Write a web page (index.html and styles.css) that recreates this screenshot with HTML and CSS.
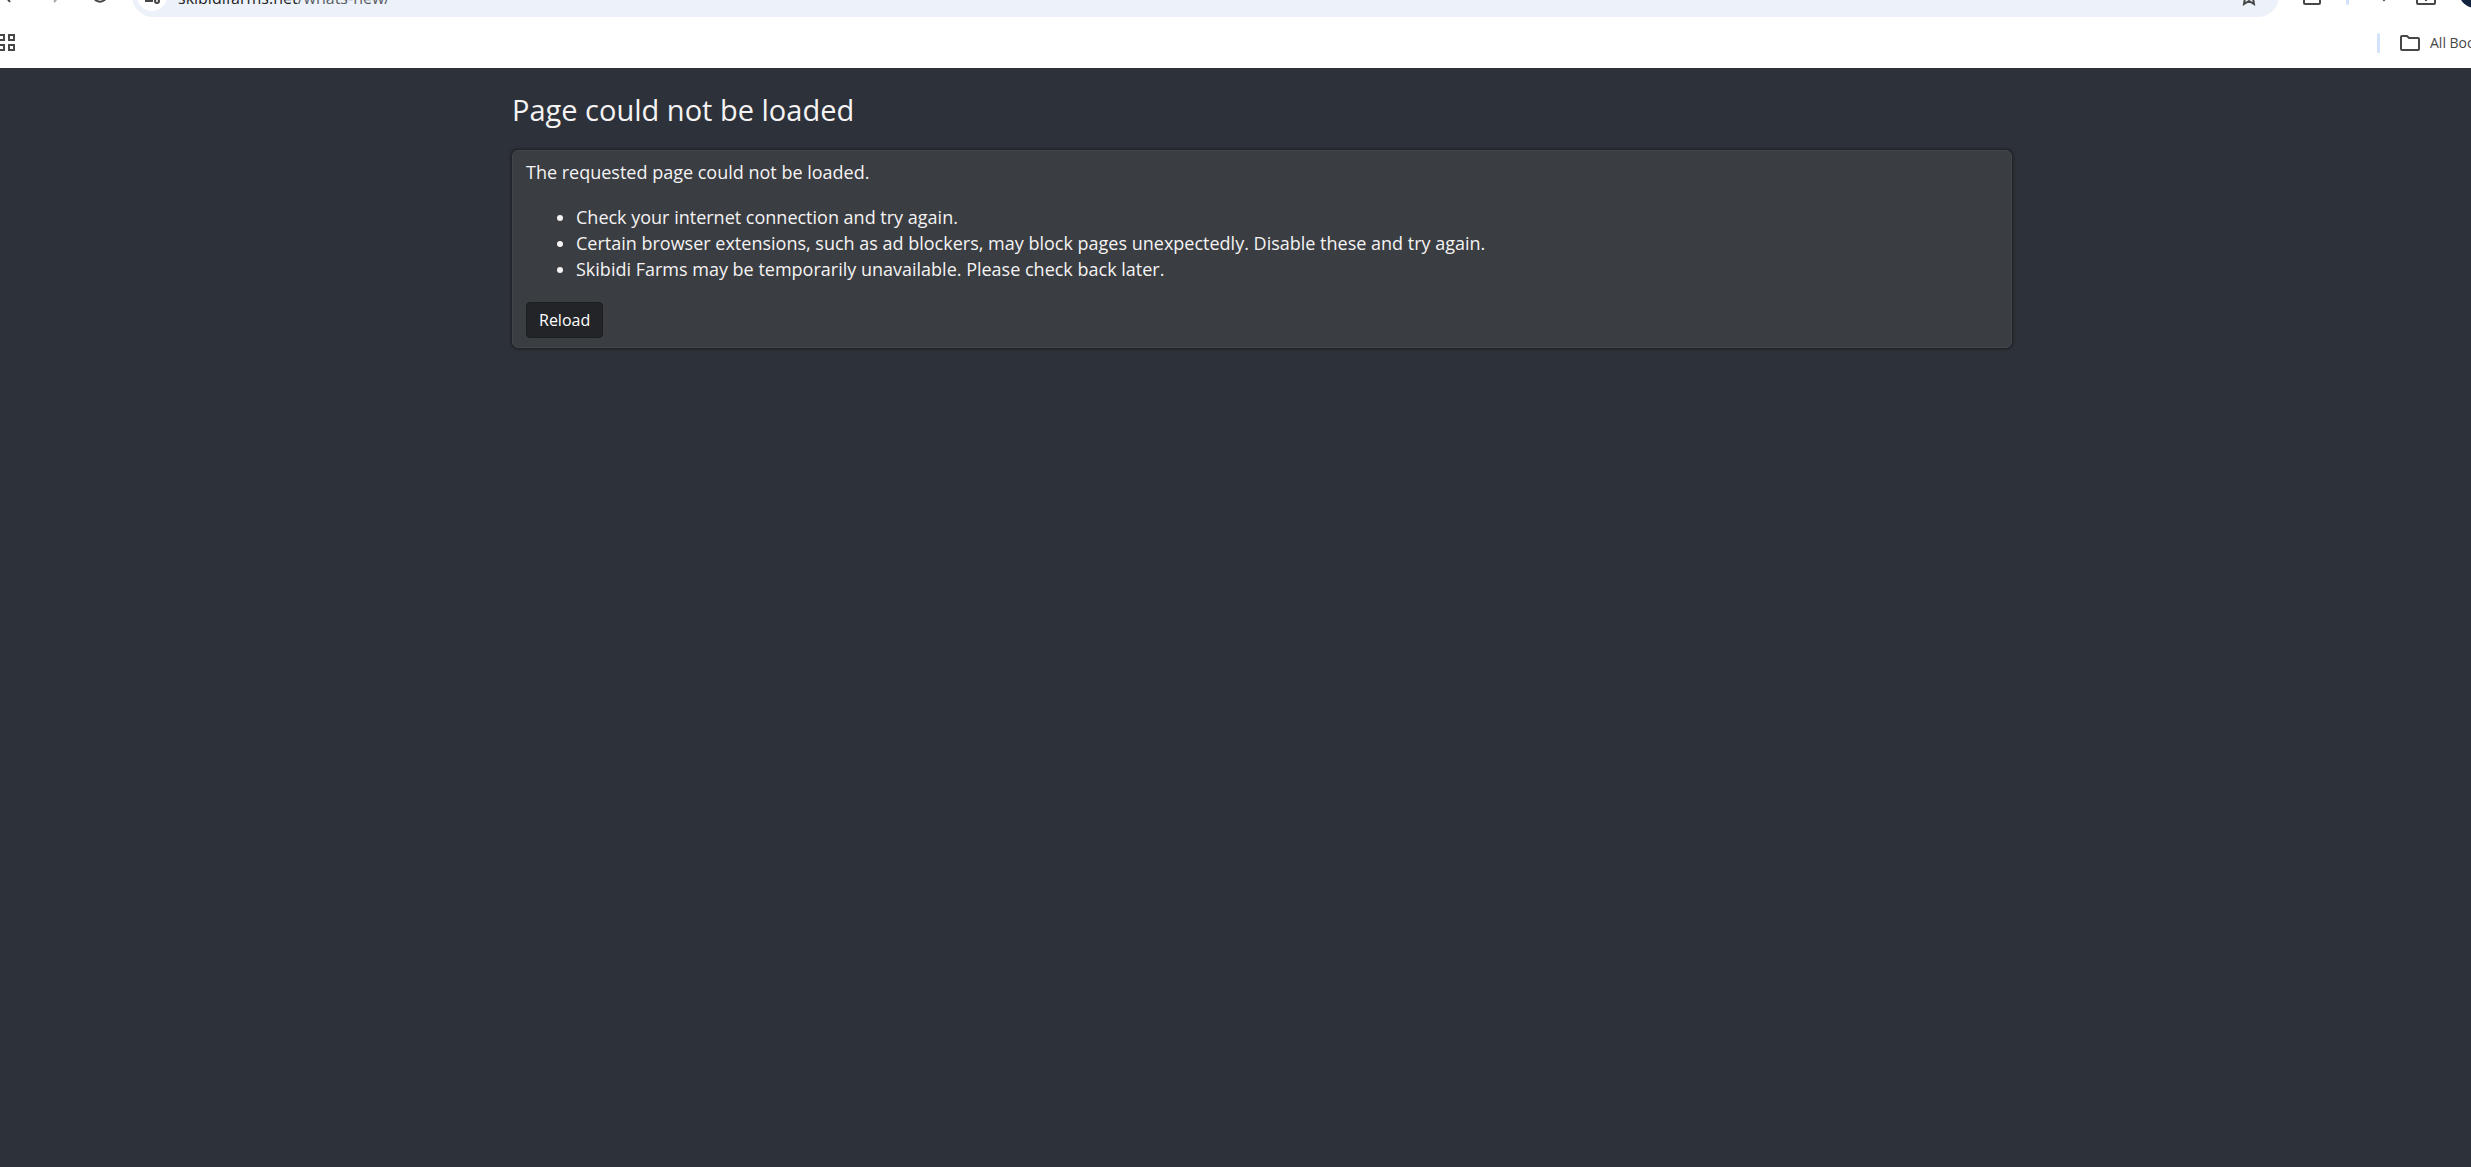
FILE: index.html
```html
<!DOCTYPE html>
<html lang="en">
<head>
<meta charset="utf-8">
<meta name="viewport" content="width=device-width, initial-scale=1">
<title>Page could not be loaded</title>
<link rel="stylesheet" href="styles.css">
</head>
<body>
<header class="browser">
  <div class="toolbar">
    <nav class="nav" aria-label="Navigation">
      <button class="icon-btn" aria-label="Back"><svg width="26" height="26" viewBox="0 0 26 26"><path d="M21 13H1M10 4l-7 9 7 9"/></svg></button>
      <button class="icon-btn muted" aria-label="Forward"><svg width="26" height="26" viewBox="0 0 26 26"><path d="M0 13h15M8 4l8 9-8 9"/></svg></button>
      <button class="icon-btn" aria-label="Refresh"><svg width="26" height="26" viewBox="0 0 26 26"><path d="M14 11a7 7 0 1 0 1 4M15 5v6h-6"/></svg></button>
    </nav>
    <div class="omnibox">
      <button class="site-info" aria-label="Site information"><svg width="20" height="20" viewBox="0 0 20 20"><path d="M10 6h7M3 15h8"/><circle cx="5" cy="6" r="2"/><circle cx="15" cy="15" r="2"/></svg></button>
      <a class="url" href="#">skibidifarms.net<span class="path">/whats-new/</span></a>
      <button class="icon-btn" aria-label="Bookmark this page"><svg width="20" height="20" viewBox="0 0 20 20"><path d="M10 2l2 6h6l-4 4 1 6-5-3-5 3 1-6-4-4h6z"/></svg></button>
    </div>
    <div class="actions">
      <button class="icon-btn" aria-label="Extensions"><svg width="22" height="22" viewBox="0 0 22 22"><path d="M2 5h16v15q0 1-1 1H3q-1 0-1-1z"/></svg></button>
      <span class="divider"></span>
      <button class="icon-btn" aria-label="Downloads"><svg width="22" height="22" viewBox="0 0 22 22"><path d="M13 2v15M10 14l3 3 3-3"/></svg></button>
      <button class="icon-btn" aria-label="Side panel"><svg width="22" height="22" viewBox="0 0 22 22"><path d="M2 4h18v16q0 1-1 1H3q-1 0-1-1zM11 4v14"/></svg></button>
      <button class="avatar" aria-label="Profile"></button>
    </div>
  </div>
  <div class="bookmarks">
    <button class="icon-btn" aria-label="Tab groups"><svg width="16" height="17" viewBox="0 0 16 17"><path d="M-1 1h5v5h-5zM9 1h5v5H9zM-1 11h5v5h-5zM9 11h5v5H9z"/></svg></button>
    <div class="all">
      <span class="divider"></span>
      <a class="folder" href="#"><svg width="22" height="18" viewBox="0 0 22 18"><path d="M2 3q0-1 1-1h5l2 2h9q1 0 1 1v10q0 1-1 1H3q-1 0-1-1z"/></svg>All Bookmarks</a>
    </div>
  </div>
</header>
<main class="page">
  <div class="content">
    <h1>Page could not be loaded</h1>
    <section class="card">
      <p>The requested page could not be loaded.</p>
      <ul>
        <li>Check your internet connection and try again.</li>
        <li>Certain browser extensions, such as ad blockers, may block pages unexpectedly. Disable these and try again.</li>
        <li>Skibidi Farms may be temporarily unavailable. Please check back later.</li>
      </ul>
      <button class="reload">Reload</button>
    </section>
  </div>
</main>
</body>
</html>
```
FILE: styles.css
```css
* { box-sizing: border-box; }
body {
  margin: 0;
  min-height: 100vh;
  display: flex;
  flex-direction: column;
  background: #2d3139;
  color: #f5f3f4;
  font: 18px/26px "Open Sans", sans-serif;
  overflow-x: hidden;
}
button { border: 0; padding: 0; background: none; font: inherit; color: inherit; }
a { color: inherit; text-decoration: none; }
svg { display: block; fill: none; stroke: #474747; stroke-width: 2; }

.browser { background: #fff; color: #1f1f1f; }
.toolbar { display: flex; align-items: flex-end; height: 17px; overflow: hidden; }
.nav { display: flex; gap: 20px; width: 132px; }
.icon-btn { flex: none; display: block; }
.nav .icon-btn { margin-bottom: 11px; }
.muted svg { stroke: #a8a8a8; }
.omnibox {
  flex: 1;
  display: flex;
  align-items: center;
  height: 42px;
  padding: 0 20px 0 5px;
  border-radius: 21px;
  background: #ecf1fa;
}
.site-info { display: grid; place-items: center; width: 30px; height: 30px; border-radius: 15px; background: #fff; }
.url { flex: 1; padding: 4px 0 0 11px; font-size: 16px; }
.path { color: #5a5e63; }
.actions { display: flex; align-items: flex-end; width: 192px; gap: 22px; padding-left: 23px; }
.actions .icon-btn, .actions .divider { margin-bottom: 12px; }
.divider { flex: none; width: 3px; height: 20px; border-radius: 2px; background: #d3e3fd; }
.avatar { flex: none; width: 32px; height: 32px; margin-bottom: 9px; border-radius: 16px; background: #12233f; }
.bookmarks { display: flex; justify-content: space-between; align-items: center; height: 51px; overflow: hidden; }
.all { display: flex; align-items: center; gap: 19px; width: 94px; font-size: 14px; white-space: nowrap; }
.folder { display: flex; align-items: center; gap: 9px; color: #474747; }

.page { flex: 1; padding: 23px 0 24px 53px; }
.content { max-width: 1500px; margin: 0 auto; }
h1 { margin: 0 0 21px; font-size: 29px; line-height: 38px; font-weight: 400; }
.card {
  padding: 8px 13px 9px;
  border: 1px solid #42454a;
  border-radius: 6px;
  background: #3a3d41;
  box-shadow: 0 0 3px 1px #1b1d21;
}
.card p { margin: 0; }
.card ul { margin: 19px 0 20px; padding-left: 50px; }
.reload {
  display: block;
  height: 36px;
  padding: 0 12px;
  border: 1px solid #1b1d21;
  border-radius: 4px;
  background: #222428;
  color: #fff;
  font-size: 16px;
}
```
